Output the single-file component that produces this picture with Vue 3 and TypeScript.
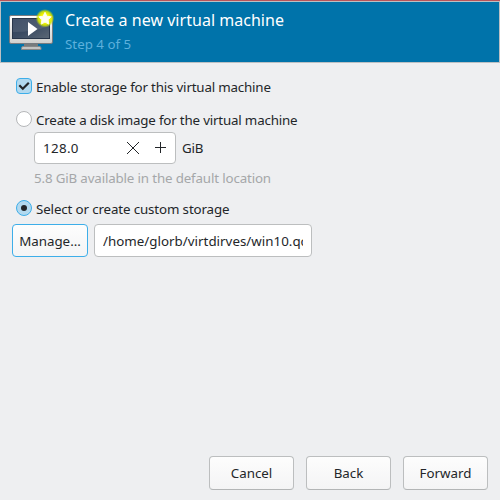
<script setup lang="ts">
import { ref } from 'vue'

const enableStorage = ref(true)
const storageMode = ref<'create' | 'custom'>('custom')
const diskSize = ref(128)
const path = ref('/home/glorb/virtdirves/win10.qcow2')
const actions: string[] = ['Cancel', 'Back', 'Forward']
</script>

<template>
  <main class="window">
    <header class="banner">
      <svg class="monitor" width="48" height="48" viewBox="0 0 48 48">
        <defs>
          <linearGradient id="frame" x1="0" y1="0" x2="0" y2="1">
            <stop offset="0" stop-color="#ffffff" />
            <stop offset="1" stop-color="#cfcfcd" />
          </linearGradient>
          <linearGradient id="screen" x1="0" y1="0" x2="1" y2="1">
            <stop offset="0" stop-color="#30425c" />
            <stop offset="0.5" stop-color="#3b4b62" />
            <stop offset="1" stop-color="#5c6876" />
          </linearGradient>
          <radialGradient id="glow">
            <stop offset="0.5" stop-color="#f2f500" />
            <stop offset="0.75" stop-color="#d3e300" stop-opacity="0.9" />
            <stop offset="1" stop-color="#a8cc20" stop-opacity="0" />
          </radialGradient>
        </defs>
        <path d="M17 39h14v4H17z" fill="#777b7d" />
        <path d="M14.500 45.500v-1.500q0-1.500 1.500-1.500h16.500q1.500 0 1.500 1.500v1.500z" fill="#c2c3c2" stroke="#858889" />
        <rect x="2.500" y="11.500" width="43" height="28" rx="1.500" fill="url(#frame)" stroke="#777b80" />
        <rect x="5.500" y="14.500" width="37" height="20" fill="url(#screen)" stroke="#29364a" />
        <path d="M6 15h36v7Q27 28 6 28z" fill="#ffffff" opacity="0.09" />
        <path d="M21 18v14l9.500-7z" fill="#ffffff" />
        <circle cx="38" cy="14.300" r="9.400" fill="url(#glow)" />
        <path d="m38 8.300 1.900 3.900 4.300.6-3.100 3 .7 4.300-3.800-2-3.800 2 .7-4.300-3.100-3 4.300-.6z" fill="#fffff0" stroke="#ffffe4" stroke-linejoin="round" />
      </svg>
      <div class="headings">
        <h1>Create a new virtual machine</h1>
        <p>Step 4 of 5</p>
      </div>
    </header>

    <section class="content">
      <label class="choice enable">
        <input v-model="enableStorage" type="checkbox" />
        <span class="mark box" :class="{ on: enableStorage }">
          <svg v-if="enableStorage" width="14" height="14" viewBox="0 0 14 14"><path d="m2.300 6.200 3.500 3.500 6-6" /></svg>
        </span>
        <span>Enable storage for this virtual machine</span>
      </label>
      <label class="choice create">
        <input v-model="storageMode" type="radio" value="create" />
        <span class="mark round" :class="{ on: storageMode === 'create' }"></span>
        <span>Create a disk image for the virtual machine</span>
      </label>
      <div class="size-row">
        <div class="spin">
          <span class="value">{{ diskSize.toFixed(1) }}</span>
          <svg class="clear" width="14" height="14" viewBox="0 0 14 14" @click="diskSize = 0"><path d="m1 1 12 12M13 1 1 13" /></svg>
          <svg class="plus" width="12" height="12" viewBox="0 0 12 12" @click="diskSize++"><path d="M5.500 0v11M0 5.500h11" /></svg>
        </div>
        <span class="unit">GiB</span>
      </div>
      <p class="available">5.8 GiB available in the default location</p>
      <label class="choice custom">
        <input v-model="storageMode" type="radio" value="custom" />
        <span class="mark round" :class="{ on: storageMode === 'custom' }"></span>
        <span>Select or create custom storage</span>
      </label>
      <div class="path-row">
        <button class="button manage" type="button">Manage...</button>
        <input v-model="path" class="path" type="text" spellcheck="false" />
      </div>
    </section>

    <footer class="actions">
      <button v-for="action in actions" :key="action" class="button" type="button">{{ action }}</button>
    </footer>
  </main>
</template>

<style>
body {
  background: #eeeff1;
}
</style>

<style scoped>
.window {
  box-sizing: border-box;
  display: flex;
  flex-direction: column;
  width: 500px;
  height: 500px;
  overflow: hidden;
  border-top: 1px solid #b95459;
  background: #eeeff1;
  color: #232629;
  font: 13.333px/18px "Noto Sans", sans-serif;
}
h1,
p {
  margin: 0;
  font-weight: 400;
}
.banner {
  box-sizing: border-box;
  display: flex;
  height: 62px;
  padding: 2px 7px 0 6px;
  border: 1px solid #bcc0c3;
  background: #0073aa;
}
.monitor {
  display: block;
  flex: none;
}
.headings {
  padding: 5px 0 0 10px;
}
h1 {
  color: #fff;
  font-size: 16px;
  line-height: 22px;
  letter-spacing: 0.03px;
}
.headings p {
  margin-top: 4px;
  color: #5db0dc;
  line-height: 18px;
}
.content {
  flex: 1;
  padding: 15px 12px 0;
}
.choice {
  display: flex;
  align-items: flex-start;
  height: 18px;
  padding-left: 4px;
  letter-spacing: -0.18px;
}
.choice > input {
  appearance: none;
  width: 0;
  height: 0;
  margin: 0;
}
.mark {
  box-sizing: border-box;
  flex: none;
  width: 16px;
  height: 16px;
  margin-right: 4px;
  border: 1px solid #b5b7b9;
  background: #fff;
}
.box {
  border-radius: 4px;
}
.round {
  display: flex;
  align-items: center;
  justify-content: center;
  border-radius: 50%;
}
.mark.on {
  border-color: #3daee9;
  background: #b2d9ef;
}
.mark svg {
  display: block;
}
.mark path {
  fill: none;
  stroke: #232629;
  stroke-width: 2.2;
}
.round.on::after {
  width: 6px;
  height: 6px;
  border-radius: 50%;
  background: #232629;
  content: "";
}
.create {
  margin-top: 15px;
}
.size-row {
  display: flex;
  align-items: center;
  gap: 6px;
  margin: 3px 0 0 22px;
}
.spin {
  box-sizing: border-box;
  display: flex;
  align-items: center;
  width: 142px;
  height: 32px;
  padding: 0 8px;
  border: 1px solid #bcbebf;
  border-radius: 4px;
  background: #fff;
}
.value {
  flex: 1;
  letter-spacing: 0.35px;
}
.unit {
  letter-spacing: -0.15px;
}
.spin path {
  fill: none;
  stroke: #232629;
}
.plus {
  margin-left: 15px;
}
.available {
  margin: 5px 0 0 22px;
  color: #a5a7a9;
  letter-spacing: -0.15px;
}
.choice.custom {
  margin-top: 13px;
  letter-spacing: -0.13px;
}
.path-row {
  display: flex;
  gap: 6px;
  margin-top: 6px;
}
.button {
  box-sizing: border-box;
  width: 85px;
  height: 34px;
  padding: 0;
  border: 1px solid #bcbebf;
  border-bottom-color: #b3b5b6;
  border-radius: 4px;
  background: linear-gradient(#fdfdfd, #f4f4f5);
  color: inherit;
  font: inherit;
}
.button.manage {
  width: 76px;
  height: 33px;
  border-color: #3daee9;
}
.path {
  box-sizing: border-box;
  width: 218px;
  height: 33px;
  padding: 0 8px;
  border: 1px solid #bcbebf;
  border-radius: 4px;
  outline: none;
  background: #fff;
  color: inherit;
  font: inherit;
  letter-spacing: 0.02px;
}
.actions {
  display: flex;
  justify-content: flex-end;
  gap: 12px;
  padding: 0 12px 10px 0;
}
</style>
